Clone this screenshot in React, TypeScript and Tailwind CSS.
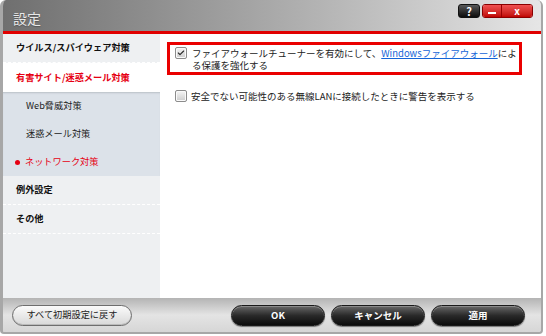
import { Check } from 'lucide-react';

const Checkbox = ({ checked }: { checked?: boolean }) => (
  <span className="flex h-[12px] w-[12px] shrink-0 items-center justify-center rounded-[2px] border border-[#8c8c8c] bg-gradient-to-b from-[#f6f6f6] to-[#cdcdcd] shadow-[inset_0_0_0_1px_#fafafa]">
    {checked && <Check size={8} strokeWidth={3.5} className="text-[#2b2b2b]" />}
  </span>
);

const SideItem = ({ label, active }: { label: string; active?: boolean }) => (
  <div
    className={
      active
        ? 'flex h-[29px] items-center bg-white pl-[13px] font-bold text-[#e60012]'
        : 'flex h-[29px] items-center border-b border-dashed border-white pl-[13px] font-bold text-[#111]'
    }
  >
    {label}
  </div>
);

const SubItem = ({ label, active }: { label: string; active?: boolean }) => (
  <div className={active ? 'flex h-[28px] items-center gap-[5px] pl-[12px] text-[#e60012]' : 'flex h-[28px] items-center pl-[23px] text-[#222]'}>
    {active && <span className="h-[5px] w-[5px] rounded-full bg-[#e60012]" />}
    {label}
  </div>
);

const DarkButton = ({ label }: { label: string }) => (
  <button className="h-[21px] w-[94px] rounded-full border border-[#1a1a1a] bg-gradient-to-b from-[#6a6a6a] via-[#2a2a2a] to-[#0c0c0c] text-[9.5px] font-bold text-white shadow-[inset_0_1px_0_#8a8a8a,0_1px_1px_#777]">
    {label}
  </button>
);

export default function App() {
  return (
    <div className="h-[336px] w-[546px] overflow-hidden bg-white font-['Noto_Sans_CJK_JP','Noto_Sans',sans-serif]">
      <div className="flex h-[334px] w-[543px] flex-col overflow-hidden rounded-t-[6px] rounded-b-[4px] border-l-[3px] border-r-[2px] border-b-[2px] border-[#a7a7a7] bg-[#d9d9d9]">
        {/* title bar */}
        <div className="flex h-[31px] shrink-0 items-start justify-between bg-gradient-to-r from-[#6f6f6f] via-[#a9a9a9] to-[#e6e6e6] pl-[10px] pr-[8px]">
          <span className="mt-[8px] text-[14px] leading-[20px] text-[#e8e8e8] [text-shadow:0_1px_1px_#555]">設定</span>
          <div className="mt-[4px] flex gap-[2px]">
            <span className="flex h-[14px] w-[22px] items-center justify-center rounded-[3px] border border-[#111] bg-gradient-to-b from-[#5a5a5a] to-[#0d0d0d] text-[11px] font-bold leading-none text-white">
              ?
            </span>
            <div className="flex h-[14px] overflow-hidden rounded-[3px] border border-[#8a0000]">
              <span className="flex w-[19px] items-center justify-center border-r border-[#9a0000] bg-gradient-to-b from-[#f05050] to-[#c00000]">
                <span className="mt-[4px] h-[2px] w-[8px] bg-white" />
              </span>
              <span className="flex w-[30px] items-center justify-center bg-gradient-to-b from-[#f05050] to-[#c00000] text-[10px] font-bold leading-none text-white">
                x
              </span>
            </div>
          </div>
        </div>
        <div className="h-[3px] shrink-0 bg-[#e00000]" />

        {/* body */}
        <div className="flex h-[264px] shrink-0">
          <div className="flex w-[157px] shrink-0 flex-col bg-[#eef0f2] text-[9.2px]">
            <SideItem label="ウイルス/スパイウェア対策" />
            <SideItem label="有害サイト/迷惑メール対策" active />
            <div className="flex flex-col bg-[#dce2e9] shadow-[inset_0_2px_2px_-1px_#b9bfc6]">
              <SubItem label="Web脅威対策" />
              <SubItem label="迷惑メール対策" />
              <SubItem label="ネットワーク対策" active />
            </div>
            <SideItem label="例外設定" />
            <SideItem label="その他" />
          </div>

          <div className="flex-1 bg-white pl-[7px] pt-[8px] text-[9.5px] leading-[12px] text-[#222]">
            <div className="flex w-[355px] gap-[5px] border-[3px] border-[#ea0000] pl-[5px] pt-[2px] pb-[1px]">
              <Checkbox checked />
              <div className="flex flex-col">
                <div className="flex whitespace-nowrap">
                  <span>ファイアウォールチューナーを有効にして、</span>
                  <span className="text-[#1565d8] underline">Windowsファイアウォール</span>
                  <span>によ</span>
                </div>
                <div>る保護を強化する</div>
              </div>
            </div>
            <div className="mt-[15px] flex items-center gap-[4px] pl-[8px]">
              <Checkbox />
              <span>安全でない可能性のある無線LANに接続したときに警告を表示する</span>
            </div>
          </div>
        </div>

        {/* footer */}
        <div className="flex flex-1 items-center bg-gradient-to-b from-[#b4b4b4] via-[#e4e4e4] to-[#d6d6d6] pl-[9px] pr-[16px]">
          <button className="h-[21px] w-[120px] rounded-full border border-[#6e6e6e] bg-gradient-to-b from-[#fbfbfb] to-[#d8d8d8] text-[9.2px] text-[#222] shadow-[inset_0_-1px_0_#bbb]">
            すべて初期設定に戻す
          </button>
          <div className="ml-auto flex gap-[6px]">
            <DarkButton label="OK" />
            <DarkButton label="キャンセル" />
            <DarkButton label="適用" />
          </div>
        </div>
      </div>
    </div>
  );
}
